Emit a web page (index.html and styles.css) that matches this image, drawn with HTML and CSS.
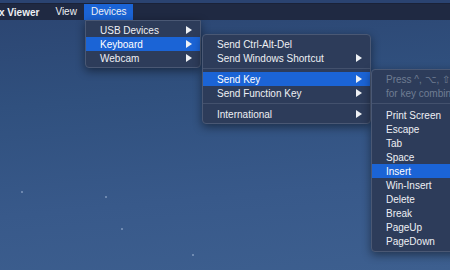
FILE: index.html
```html
<!doctype html>
<html lang="en">
	<head>
		<meta charset="UTF-8">
		<title>Devices menu</title>
		<link rel="stylesheet" href="styles.css">
	</head>

	<body>
		<div class="desktop">
			<div class="top-band"></div>

			<div class="menubar">
				<span class="app-name">x Viewer</span>
				<span class="menubar-item">View</span>
				<span class="menubar-item active">Devices</span>
			</div>

			<!-- stars on the wallpaper -->
			<span class="star" style="left: 21px; top: 191px;"></span>
			<span class="star" style="left: 105px; top: 196px;"></span>
			<span class="star" style="left: 121px; top: 228px;"></span>
			<span class="star" style="left: 192px; top: 254px;"></span>

			<ul class="menu menu-devices">
				<li class="item">USB Devices <span class="arrow"></span></li>
				<li class="item selected">Keyboard <span class="arrow"></span></li>
				<li class="item">Webcam <span class="arrow"></span></li>
			</ul>

			<ul class="menu menu-keyboard">
				<li class="item">Send Ctrl-Alt-Del</li>
				<li class="item">Send Windows Shortcut <span class="arrow"></span></li>
				<li class="separator"></li>
				<li class="item selected">Send Key <span class="arrow"></span></li>
				<li class="item">Send Function Key <span class="arrow"></span></li>
				<li class="separator"></li>
				<li class="item">International <span class="arrow"></span></li>
			</ul>

			<ul class="menu menu-keys">
				<li class="hint">Press ^, ⌥, ⇧ or ⌘ to change modifiers<br>for key combinations</li>
				<li class="separator"></li>
				<li class="item">Print Screen</li>
				<li class="item">Escape</li>
				<li class="item">Tab</li>
				<li class="item">Space</li>
				<li class="item selected">Insert</li>
				<li class="item">Win-Insert</li>
				<li class="item">Delete</li>
				<li class="item">Break</li>
				<li class="item">PageUp</li>
				<li class="item">PageDown</li>
			</ul>
		</div>
	</body>
</html>
```

FILE: styles.css
```css
* {
	padding: 0;
	margin: 0;
	box-sizing: border-box;
}
body {
	width: 450px;
	height: 270px;
	overflow: hidden;
	font-family: "Liberation Sans", Arial, sans-serif;
	font-size: 10px;
	color: #eef0f4;
}
.desktop {
	position: relative;
	width: 450px;
	height: 270px;
	overflow: hidden;
	background: linear-gradient(175deg, #2b4470 0%, #30507e 35%, #38598a 70%, #3d5f8f 100%);
}
.top-band {
	height: 4px;
	background-color: #2a4371;
	border-bottom: 1px solid #1a2238;
}
.menubar {
	display: flex;
	align-items: center;
	height: 16px;
	background-color: #1f2942;
}
.app-name {
	font-weight: bold;
	margin-left: -1px;
	padding-right: 9px;
}
.menubar-item {
	height: 16px;
	line-height: 16px;
	padding: 0 7px;
}
.menubar-item.active {
	background-color: #1b64d6;
}
.star {
	position: absolute;
	width: 2px;
	height: 2px;
	border-radius: 1px;
	background-color: rgba(200, 215, 240, 0.5);
}
.menu {
	position: absolute;
	list-style: none;
	padding: 2px 0;
	background-color: #2d3c5a;
	border: 1px solid #4a5874;
	border-radius: 4px;
	box-shadow: 0 3px 10px rgba(0, 0, 0, 0.45);
}
.menu-devices {
	left: 85px;
	top: 20px;
	width: 116px;
	border-top-left-radius: 0;
	border-top-right-radius: 0;
}
.menu-keyboard {
	left: 202px;
	top: 34px;
	width: 169px;
}
.menu-keys {
	left: 371px;
	top: 69px;
	width: 200px;
	padding-bottom: 3px;
}
.item {
	display: flex;
	align-items: center;
	justify-content: space-between;
	height: 14px;
	padding: 0 8px 0 14px;
	white-space: nowrap;
}
.item.selected {
	background-color: #1b64d6;
	color: #fff;
}
.arrow {
	width: 0;
	height: 0;
	border-top: 4px solid transparent;
	border-bottom: 4px solid transparent;
	border-left: 6px solid #eef1f5;
}
.separator {
	height: 1px;
	margin: 3px 0 3px;
	background-color: #43516d;
}
.hint {
	padding: 1px 14px 0;
	line-height: 13.5px;
	color: #6f7c93;
	white-space: nowrap;
}
.menu-keys .separator {
	margin: 3px 0 4px;
}
```
